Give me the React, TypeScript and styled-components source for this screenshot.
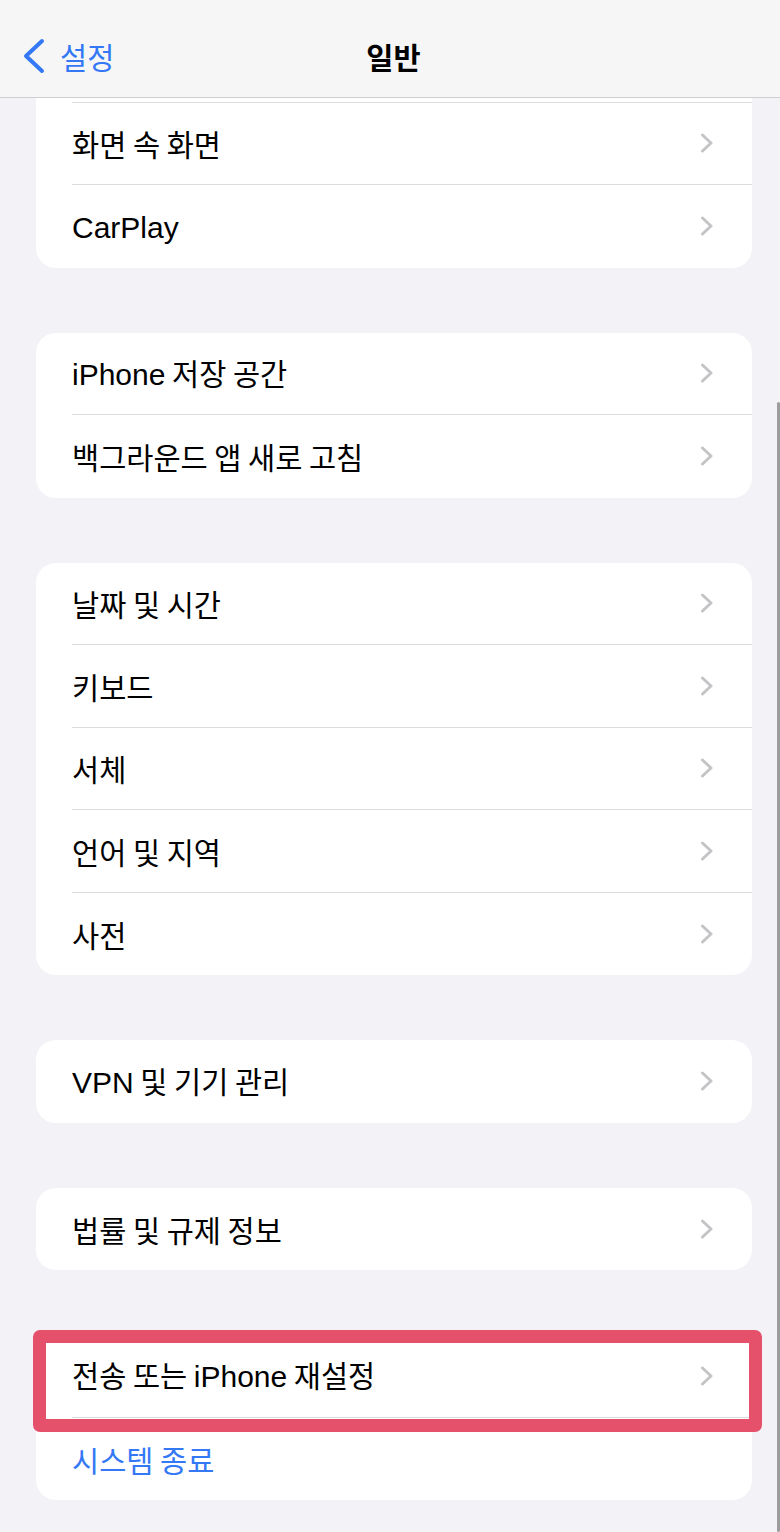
import React from "react";
import styled, { createGlobalStyle } from "styled-components";

const GlobalStyle = createGlobalStyle`
  html, body {
    margin: 0;
    padding: 0;
    background: #f2f2f7;
  }
  * {
    box-sizing: border-box;
  }
`;

const KO_FONT = `"Noto Sans CJK KR", "Liberation Sans", sans-serif`;
const LATIN_FONT = `"Liberation Sans", "Noto Sans CJK KR", sans-serif`;
const BLUE = "#3478f6";

const Page = styled.div`
  position: relative;
  width: 780px;
  height: 1532px;
  overflow: hidden;
  background: #f2f2f7;
  font-family: ${KO_FONT};
  color: #000;
`;

const NavBar = styled.header`
  height: 98px;
  display: grid;
  grid-template-columns: 1fr auto 1fr;
  align-items: center;
  padding: 14px 15px 0 22px;
  background: #f6f6f6;
  border-bottom: 1px solid #cfcfd2;
`;

const BackButton = styled.div`
  display: flex;
  align-items: center;
  gap: 14px;
  color: ${BLUE};
  font-size: 29.5px;
  line-height: 40px;
`;

const NavTitle = styled.div`
  font-size: 29.5px;
  line-height: 40px;
  font-weight: 600;
`;

const Scroller = styled.div`
  padding: 0 28px 34px 36px;
  display: flex;
  flex-direction: column;
  gap: 65px;
`;

// the first group is scrolled partly under the nav bar
const Card = styled.section<{ $cutTop?: boolean }>`
  position: relative;
  background: #fff;
  border-radius: ${({ $cutTop }) => ($cutTop ? "0 0 20px 20px" : "20px")};
  padding-top: ${({ $cutTop }) => ($cutTop ? "3.5px" : "0")};
`;

const Row = styled.div`
  display: flex;
  padding-left: 36px;
`;

const RowInner = styled.div<{ $last?: boolean; $topRule?: boolean }>`
  flex: 1;
  height: ${({ $topRule }) => ($topRule ? "83.5px" : "82.5px")};
  display: flex;
  align-items: center;
  justify-content: space-between;
  padding-right: 38px;
  border-top: ${({ $topRule }) => ($topRule ? "1px solid #dcdce0" : "none")};
  border-bottom: ${({ $last }) => ($last ? "none" : "1px solid #dcdce0")};
`;

const Label = styled.span<{ $action?: boolean }>`
  font-size: 29.5px;
  line-height: 40px;
  color: ${({ $action }) => ($action ? BLUE : "#000")};
  white-space: pre;
`;

const Latin = styled.span`
  font-family: ${LATIN_FONT};
  font-size: 30px;
`;

const Highlight = styled.div`
  position: absolute;
  left: -3px;
  top: -5px;
  width: 729px;
  height: 102px;
  border: 13px solid #e5506a;
  border-radius: 7px;
  pointer-events: none;
`;

const ScrollIndicator = styled.div`
  position: absolute;
  right: 0;
  top: 402px;
  bottom: 0;
  width: 3px;
  border-radius: 2px;
  background: #9d9d9f;
`;

const Chevron = () => (
  <svg width="14" height="20" viewBox="0 0 14 20" fill="none">
    <path
      d="M2.5 2 L11 10 L2.5 18"
      stroke="#c4c4c7"
      strokeWidth="3"
      strokeLinecap="round"
      strokeLinejoin="round"
    />
  </svg>
);

const BackChevron = () => (
  <svg width="24" height="36" viewBox="0 0 24 36" fill="none">
    <path
      d="M20 3 L4 18 L20 33"
      stroke={BLUE}
      strokeWidth="4"
      strokeLinecap="round"
      strokeLinejoin="round"
    />
  </svg>
);

// latin words get the wider font, like SF next to Apple SD Gothic
const renderText = (text: string) =>
  text.split(/([A-Za-z]+)/).map((part, i) =>
    /^[A-Za-z]+$/.test(part) ? <Latin key={i}>{part}</Latin> : part
  );

type Item = { label: string; action?: boolean };

const groups: Item[][] = [
  [{ label: "화면 속 화면" }, { label: "CarPlay" }],
  [{ label: "iPhone 저장 공간" }, { label: "백그라운드 앱 새로 고침" }],
  [
    { label: "날짜 및 시간" },
    { label: "키보드" },
    { label: "서체" },
    { label: "언어 및 지역" },
    { label: "사전" },
  ],
  [{ label: "VPN 및 기기 관리" }],
  [{ label: "법률 및 규제 정보" }],
  [{ label: "전송 또는 iPhone 재설정" }, { label: "시스템 종료", action: true }],
];

const App: React.FC = () => (
  <Page>
    <GlobalStyle />
    <NavBar>
      <BackButton>
        <BackChevron />
        <span>설정</span>
      </BackButton>
      <NavTitle>일반</NavTitle>
      <div />
    </NavBar>
    <Scroller>
      {groups.map((items, gi) => (
        <Card key={gi} $cutTop={gi === 0}>
          {items.map((item, i) => (
            <Row key={item.label}>
              <RowInner
                $last={i === items.length - 1}
                $topRule={gi === 0 && i === 0}
              >
                <Label $action={item.action}>{renderText(item.label)}</Label>
                {!item.action && <Chevron />}
              </RowInner>
            </Row>
          ))}
          {gi === groups.length - 1 && <Highlight />}
        </Card>
      ))}
    </Scroller>
    <ScrollIndicator />
  </Page>
);

export default App;
